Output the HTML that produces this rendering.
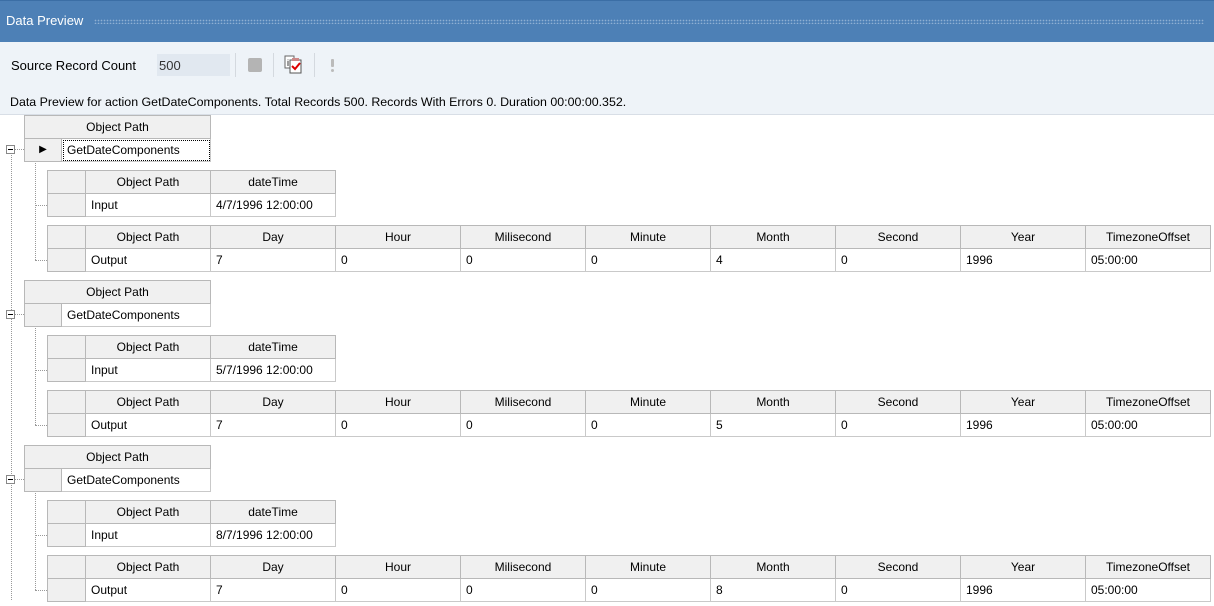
<!DOCTYPE html>
<html><head><style>
body{margin:0;width:1214px;height:606px;overflow:hidden;background:#fff;font-family:"Liberation Sans",Arial,sans-serif;font-size:12px;color:#000;position:relative}
#top{position:absolute;left:0;top:0;width:1214px;height:42px;background:#4d80b6;border-top:1px solid #3b6ea5}
#top span{position:absolute;left:6px;top:12px;color:#fff;font-size:13px}
#dots{position:absolute;left:94px;top:18px;width:1110px;height:5px;background-image:radial-gradient(#8fb0d3 0.7px,transparent 0.9px);background-size:3px 3px}
#tb{position:absolute;left:0;top:42px;width:1214px;height:72px;background:#eef3f8;border-bottom:1px solid #d8dee6}
.t{position:absolute;font-size:13px}
table{position:absolute;border-collapse:collapse;table-layout:fixed}
td{height:22px;padding:0 0 0 5px;border:1px solid #c9c9c9;font-size:12px;white-space:nowrap;overflow:hidden;line-height:22px}
td.h{background:#f0f0f0;text-align:center;padding:0;border-color:#b8b8b8}
td.r{background:#f0f0f0;padding:0;border-color:#b8b8b8}
.v{position:absolute;border-left:1px dotted #999}
.hz{position:absolute;border-top:1px dotted #999}
.mb{position:absolute;width:7px;height:7px;border:1px solid #888;background:#fff}
.mb:after{content:"";position:absolute;left:1px;top:3px;width:5px;height:1px;background:#000}
</style></head><body>
<div id="top"><span>Data Preview</span><div id="dots"></div></div>
<div id="tb">
<div class="t" style="left:11px;top:16px">Source Record Count</div>
<div style="position:absolute;left:157px;top:12px;width:73px;height:22px;background:#e1e8f0"></div>
<div class="t" style="left:159px;top:16px;color:#333">500</div>
<div style="position:absolute;left:235px;top:11px;width:1px;height:24px;background:#d4d9df"></div>
<div style="position:absolute;left:248px;top:16px;width:14px;height:14px;background:#b4b4b4;border-radius:2px"></div>
<div style="position:absolute;left:273px;top:11px;width:1px;height:24px;background:#d4d9df"></div>
<svg style="position:absolute;left:284px;top:13px" width="20" height="20"><rect x="1" y="1" width="9" height="12" fill="#fff" stroke="#666"/><text x="3" y="11" font-size="9" font-family="Liberation Sans">i</text><rect x="6" y="5" width="11" height="13" fill="#fff" stroke="#555"/><rect x="8" y="3" width="7" height="3" fill="#c88"/><path d="M8 11l3 3 5-6" stroke="#d00" stroke-width="2" fill="none"/></svg>
<div style="position:absolute;left:314px;top:11px;width:1px;height:24px;background:#d4d9df"></div>
<div style="position:absolute;left:331px;top:17px;width:3px;height:8px;background:#bbb;border-radius:1px"></div>
<div style="position:absolute;left:331px;top:27px;width:3px;height:3px;background:#bbb;border-radius:2px"></div>
<div class="t" style="left:10px;top:53px;font-size:12.4px">Data Preview for action GetDateComponents. Total Records 500. Records With Errors 0. Duration 00:00:00.352.</div>
</div>

<div class="v" style="left:11px;top:155px;height:445px"></div>
<div class="mb" style="left:6px;top:145px"></div><div class="hz" style="left:15px;top:149px;width:9px"></div>
<div class="mb" style="left:6px;top:310px"></div><div class="hz" style="left:15px;top:314px;width:9px"></div>
<div class="mb" style="left:6px;top:475px"></div><div class="hz" style="left:15px;top:479px;width:9px"></div>

<div class="v" style="left:35px;top:161px;height:99px"></div><div class="hz" style="left:35px;top:205px;width:12px"></div><div class="hz" style="left:35px;top:260px;width:12px"></div>
<div class="v" style="left:35px;top:326px;height:99px"></div><div class="hz" style="left:35px;top:370px;width:12px"></div><div class="hz" style="left:35px;top:425px;width:12px"></div>
<div class="v" style="left:35px;top:491px;height:99px"></div><div class="hz" style="left:35px;top:535px;width:12px"></div><div class="hz" style="left:35px;top:590px;width:12px"></div>

<table style="left:24px;top:115px"><colgroup><col style="width:37px"><col style="width:149px"></colgroup>
<tr><td class="h" colspan="2">Object Path</td></tr>
<tr><td class="r" style="text-align:center;font-size:10px">&#9654;</td><td style="outline:1px dotted #000;outline-offset:-2px">GetDateComponents</td></tr></table>
<table style="left:47px;top:170px"><colgroup><col style="width:38px"><col style="width:125px"><col style="width:125px"></colgroup>
<tr><td class="h"></td><td class="h">Object Path</td><td class="h">dateTime</td></tr>
<tr><td class="r"></td><td>Input</td><td>4/7/1996 12:00:00</td></tr></table>
<table style="left:47px;top:225px"><colgroup><col style="width:38px"><col style="width:125px"><col style="width:125px"><col style="width:125px"><col style="width:125px"><col style="width:125px"><col style="width:125px"><col style="width:125px"><col style="width:125px"><col style="width:125px"></colgroup>
<tr><td class="h"></td><td class="h">Object Path</td><td class="h">Day</td><td class="h">Hour</td><td class="h">Milisecond</td><td class="h">Minute</td><td class="h">Month</td><td class="h">Second</td><td class="h">Year</td><td class="h">TimezoneOffset</td></tr>
<tr><td class="r"></td><td>Output</td><td>7</td><td>0</td><td>0</td><td>0</td><td>4</td><td>0</td><td>1996</td><td>05:00:00</td></tr></table>

<table style="left:24px;top:280px"><colgroup><col style="width:37px"><col style="width:149px"></colgroup>
<tr><td class="h" colspan="2">Object Path</td></tr>
<tr><td class="r"></td><td>GetDateComponents</td></tr></table>
<table style="left:47px;top:335px"><colgroup><col style="width:38px"><col style="width:125px"><col style="width:125px"></colgroup>
<tr><td class="h"></td><td class="h">Object Path</td><td class="h">dateTime</td></tr>
<tr><td class="r"></td><td>Input</td><td>5/7/1996 12:00:00</td></tr></table>
<table style="left:47px;top:390px"><colgroup><col style="width:38px"><col style="width:125px"><col style="width:125px"><col style="width:125px"><col style="width:125px"><col style="width:125px"><col style="width:125px"><col style="width:125px"><col style="width:125px"><col style="width:125px"></colgroup>
<tr><td class="h"></td><td class="h">Object Path</td><td class="h">Day</td><td class="h">Hour</td><td class="h">Milisecond</td><td class="h">Minute</td><td class="h">Month</td><td class="h">Second</td><td class="h">Year</td><td class="h">TimezoneOffset</td></tr>
<tr><td class="r"></td><td>Output</td><td>7</td><td>0</td><td>0</td><td>0</td><td>5</td><td>0</td><td>1996</td><td>05:00:00</td></tr></table>

<table style="left:24px;top:445px"><colgroup><col style="width:37px"><col style="width:149px"></colgroup>
<tr><td class="h" colspan="2">Object Path</td></tr>
<tr><td class="r"></td><td>GetDateComponents</td></tr></table>
<table style="left:47px;top:500px"><colgroup><col style="width:38px"><col style="width:125px"><col style="width:125px"></colgroup>
<tr><td class="h"></td><td class="h">Object Path</td><td class="h">dateTime</td></tr>
<tr><td class="r"></td><td>Input</td><td>8/7/1996 12:00:00</td></tr></table>
<table style="left:47px;top:555px"><colgroup><col style="width:38px"><col style="width:125px"><col style="width:125px"><col style="width:125px"><col style="width:125px"><col style="width:125px"><col style="width:125px"><col style="width:125px"><col style="width:125px"><col style="width:125px"></colgroup>
<tr><td class="h"></td><td class="h">Object Path</td><td class="h">Day</td><td class="h">Hour</td><td class="h">Milisecond</td><td class="h">Minute</td><td class="h">Month</td><td class="h">Second</td><td class="h">Year</td><td class="h">TimezoneOffset</td></tr>
<tr><td class="r"></td><td>Output</td><td>7</td><td>0</td><td>0</td><td>0</td><td>8</td><td>0</td><td>1996</td><td>05:00:00</td></tr></table>
</body></html>
